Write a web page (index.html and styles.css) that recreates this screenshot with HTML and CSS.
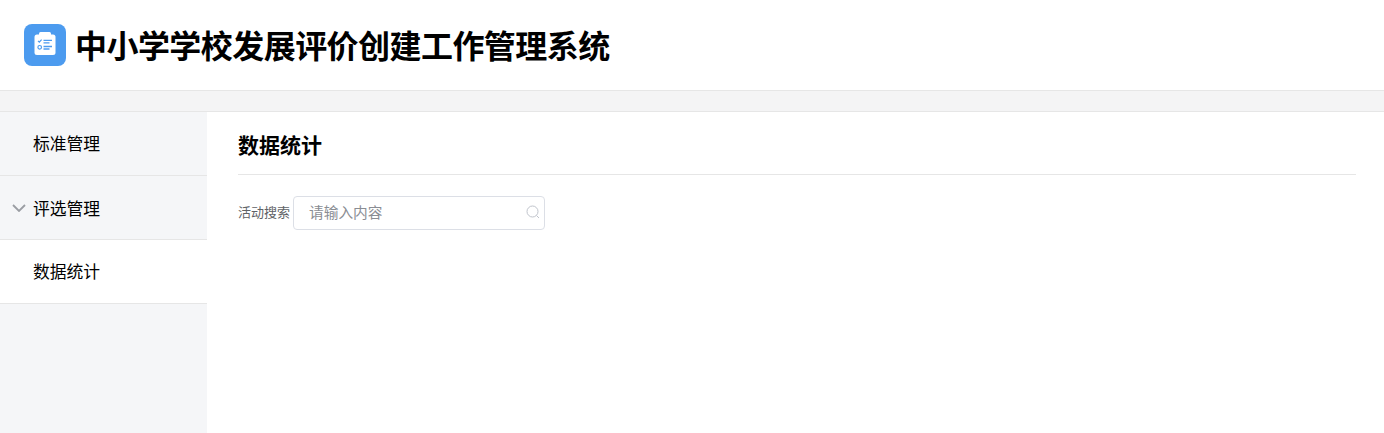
FILE: index.html
```html
<!DOCTYPE html>
<html lang="zh-CN">
  <head>
    <meta charset="UTF-8" />
    <meta name="viewport" content="width=device-width, initial-scale=1.0" />
    <title>中小学学校发展评价创建工作管理系统</title>
    <link rel="stylesheet" href="styles.css">
  </head>
  <body>
    <header class="top-bar">
      <div class="logo">
        <svg width="42" height="42" viewBox="0 0 42 42">
          <rect width="42" height="42" rx="8" fill="#4c9bef" />
          <rect x="15" y="8" width="12" height="4" rx="1.500" fill="#fff" />
          <rect x="10.500" y="10.500" width="21" height="20.500" rx="2.500" fill="#fff" />
          <path d="M14 16.800l1.300 1.300 2.300-2.400" fill="none" stroke="#4c9bef" stroke-width="1.200" />
          <circle cx="15.700" cy="23.300" r="1.800" fill="none" stroke="#4c9bef" stroke-width="1.200" />
          <path d="M19.500 16.300h8.500M19.500 18.800h6M19.500 22.500h8.500M19.500 25h6" fill="none" stroke="#4c9bef" stroke-width="1.300" />
        </svg>
      </div>
      <h1 class="site-title">中小学学校发展评价创建工作管理系统</h1>
    </header>
    <div class="band"></div>
    <div class="layout">
      <nav class="sidebar">
        <div class="menu-item">标准管理</div>
        <div class="menu-item open">
          <svg class="arrow" width="14" height="8" viewBox="0 0 14 8">
            <path d="M1 1l6 6 6-6" fill="none" stroke="#9a9da3" stroke-width="1.800" />
          </svg>
          评选管理
        </div>
        <div class="menu-item active">数据统计</div>
      </nav>
      <main class="content">
        <h2 class="page-title">数据统计</h2>
        <div class="search-row">
          <label class="search-label">活动搜索</label>
          <div class="search-box">
            <input class="search-input" type="text" placeholder="请输入内容" />
            <svg class="search-icon" width="14" height="14" viewBox="0 0 14 14">
              <circle cx="6.500" cy="6.500" r="5.500" fill="none" stroke="#c0c4cc" stroke-width="1" />
              <path d="M10.500 10.500l2.500 2.500" fill="none" stroke="#c0c4cc" stroke-width="1" />
            </svg>
          </div>
        </div>
      </main>
    </div>
  </body>
</html>
```

FILE: styles.css
```css
html,
body {
  height: 100%;
}

body {
  margin: 0;
  display: flex;
  flex-direction: column;
  font-family: "Noto Sans CJK SC", "Noto Sans", sans-serif;
  color: #000;
  background: #fff;
  overflow: hidden;
}

.top-bar {
  height: 90px;
  display: flex;
  align-items: center;
  gap: 9px;
  padding-left: 24px;
  border-bottom: 1px solid #e6e6e6;
}

.logo {
  width: 42px;
  height: 42px;
}

.logo svg {
  display: block;
}

.site-title {
  margin: 0 0 3px;
  font-size: 32px;
  font-weight: 700;
  letter-spacing: -0.55px;
}

.band {
  height: 20px;
  background: #f4f4f5;
  border-bottom: 1px solid #e6e6e6;
}

.layout {
  flex: 1;
  display: flex;
}

.sidebar {
  width: 207px;
  background: #f5f6f8;
}

.menu-item {
  position: relative;
  box-sizing: border-box;
  height: 64px;
  display: flex;
  align-items: center;
  padding: 0 0 2px 33px;
  font-size: 16.8px;
  border-bottom: 1px solid #e6e6e6;
}

.menu-item.open {
  padding-bottom: 0;
}

.menu-item.active {
  background: #fff;
}

.arrow {
  position: absolute;
  left: 12px;
  top: 28px;
}

.content {
  flex: 1;
  padding: 0 28px 0 31px;
}

.page-title {
  margin: 0;
  height: 62px;
  line-height: 65px;
  font-size: 21px;
  font-weight: 700;
  border-bottom: 1px solid #e6e6e6;
}

.search-row {
  display: flex;
  align-items: center;
  gap: 3px;
  margin-top: 21px;
}

.search-label {
  font-size: 13px;
  color: #606266;
  margin-top: -3px;
}

.search-box {
  position: relative;
  width: 252px;
  height: 34px;
}

.search-input {
  box-sizing: border-box;
  width: 100%;
  height: 100%;
  padding: 0 30px 3px 15px;
  border: 1px solid #dcdfe6;
  border-radius: 4px;
  outline: none;
  font-family: inherit;
  font-size: 14.7px;
  color: #606266;
}

.search-input::placeholder {
  color: #8a8d93;
}

.search-icon {
  position: absolute;
  right: 5px;
  top: 9px;
}
```
